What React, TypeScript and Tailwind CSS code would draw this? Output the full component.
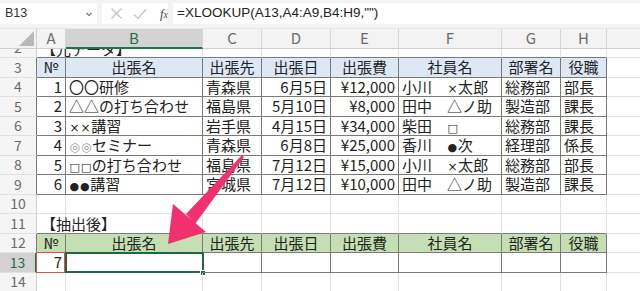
const cols = [
  { key: "A", w: "w-[29px]" },
  { key: "B", w: "w-[137px]" },
  { key: "C", w: "w-[59px]" },
  { key: "D", w: "w-[69px]" },
  { key: "E", w: "w-[68px]" },
  { key: "F", w: "w-[103px]" },
  { key: "G", w: "w-[59px]" },
  { key: "H", w: "w-[46px]" },
];

const header = ["№", "出張名", "出張先", "出張日", "出張費", "社員名", "部署名", "役職"];

const data = [
  ["1", "〇〇研修", "青森県", "6月5日", "¥12,000", "小川　×太郎", "総務部", "部長"],
  ["2", "△△の打ち合わせ", "福島県", "5月10日", "¥8,000", "田中　△ノ助", "製造部", "課長"],
  ["3", "××講習", "岩手県", "4月15日", "¥34,000", "柴田　□", "総務部", "課長"],
  ["4", "◎◎セミナー", "青森県", "6月8日", "¥25,000", "香川　●次", "経理部", "係長"],
  ["5", "□□の打ち合わせ", "福島県", "7月12日", "¥15,000", "小川　×太郎", "総務部", "部長"],
  ["6", "●●講習", "宮城県", "7月12日", "¥10,000", "田中　△ノ助", "製造部", "課長"],
];

// right aligned columns in data rows
const right = [true, false, false, true, true, false, false, false];

// symbols that Excel draws with a narrow latin font
function Txt({ s }: { s: string }) {
  return (
    <>
      {Array.from(s).map((ch, i) => {
        if (ch === "×")
          return (
            <span key={i} className="text-[12px] mx-[0.5px]" style={{ fontFamily: '"DejaVu Sans", sans-serif' }}>
              ×
            </span>
          );
        if (ch === "●" || ch === "□")
          return (
            <span key={i} className="text-[11px] mx-[0.5px]" style={{ fontFamily: '"DejaVu Sans", sans-serif' }}>
              {ch}
            </span>
          );
        if (ch === "◎")
          return (
            <span key={i} className="text-[12px] text-[#999] mx-[0.5px]" style={{ fontFamily: '"DejaVu Sans", sans-serif' }}>
              ◎
            </span>
          );
        return <span key={i}>{ch}</span>;
      })}
    </>
  );
}

function RowHead({ n, dark, selected }: { n: number; dark?: boolean; selected?: boolean }) {
  return (
    <div
      className={`w-[37px] shrink-0 h-full flex items-center justify-center text-[14px] border-b border-b-[#e1e1e1] ${
        selected
          ? "bg-[#d2d2d2] text-[#1e6e42] border-r-2 border-r-[#217346]"
          : `bg-[#f5f5f5] text-[#6a6a6a] border-r ${dark ? "border-r-[#7a7a7a]" : "border-r-[#d0d0d0]"}`
      }`}
    >
      {n}
    </div>
  );
}

function BlankRow({ n, label, darkBottom }: { n: number; label?: string; darkBottom?: boolean }) {
  return (
    <div className="flex h-[19.5px] relative">
      <RowHead n={n} />
      {cols.map((c) => (
        <div
          key={c.key}
          className={`${c.w} shrink-0 h-full border-r border-r-[#e1e1e1] border-b ${
            darkBottom ? "border-b-[#7a7a7a]" : "border-b-[#e1e1e1]"
          }`}
        />
      ))}
      <div className="flex-1 h-full border-b border-b-[#e1e1e1]" />
      {label && (
        <span className="absolute left-[41px] top-0 leading-[19.5px] text-[15px] text-[#222] whitespace-nowrap">
          {label}
        </span>
      )}
    </div>
  );
}

function TableRow({
  n,
  cells,
  bg,
  center,
}: {
  n: number;
  cells: string[];
  bg?: string;
  center?: boolean;
}) {
  return (
    <div className="flex h-[19.5px]">
      <RowHead n={n} dark />
      {cols.map((c, i) => (
        <div
          key={c.key}
          className={`${c.w} shrink-0 h-full border-r border-b border-[#7a7a7a] overflow-hidden whitespace-nowrap px-[3px] leading-[18.5px] text-[15px] text-[#222] ${
            bg ?? ""
          } ${center ? "text-center" : right[i] ? "text-right" : "text-left"}`}
        >
          <Txt s={cells[i]} />
        </div>
      ))}
      <div className="flex-1 h-full border-b border-b-[#e1e1e1]" />
    </div>
  );
}

export default function App() {
  return (
    <div
      className="w-[640px] h-[291px] overflow-hidden bg-white relative"
      style={{ fontFamily: '"Noto Sans CJK JP", "Noto Sans", sans-serif' }}
    >
      {/* formula bar */}
      <div className="h-[25px] bg-[#f3f3f3] flex items-center gap-[5px] pt-[2px]">
        <div className="w-[97px] h-[21px] bg-white flex items-center justify-between pl-[5px] pr-[4px] text-[12.5px] text-[#333]">
          <span style={{ fontFamily: '"Liberation Sans", sans-serif' }}>B13</span>
          <svg width="8" height="8" viewBox="0 0 8 8" fill="none" stroke="#777" strokeWidth="1.2">
            <path d="M1.5 3 L4 5.5 L6.5 3" />
          </svg>
        </div>
        <div className="w-[66px] h-[21px] bg-white flex items-center gap-[10px] pl-[8px]">
          <svg width="13" height="13" viewBox="0 0 13 13" stroke="#c2c2c2" strokeWidth="1.2">
            <path d="M1.5 1.5 L11.5 11.5 M11.5 1.5 L1.5 11.5" />
          </svg>
          <svg width="14" height="12" viewBox="0 0 14 12" fill="none" stroke="#c2c2c2" strokeWidth="1.2">
            <path d="M1 6.5 L5 10.5 L13 1.5" />
          </svg>
          <span
            className="text-[13px] italic text-[#444] ml-[3px]"
            style={{ fontFamily: '"Liberation Serif", serif' }}
          >
            f<span className="text-[10px]">x</span>
          </span>
        </div>
        <div
          className="flex-1 h-[21px] bg-white flex items-center pl-[4px] text-[13.5px] text-[#222] whitespace-nowrap"
          style={{ fontFamily: '"Liberation Sans", sans-serif' }}
        >
          =XLOOKUP(A13,A4:A9,B4:H9,"")
        </div>
      </div>
      <div className="h-[4px] bg-[#f3f3f3] border-b border-b-[#e6e6e6]" />

      {/* column headers */}
      <div className="flex h-[20px] bg-[#f3f3f3]">
        <div className="w-[37px] shrink-0 h-full flex items-end justify-end pr-[2px] pb-[2px] border-r border-r-[#d0d0d0] border-b border-b-[#d0d0d0]">
          <svg width="15" height="15" viewBox="0 0 15 15">
            <polygon points="15,0 15,15 0,15" fill="#b8b8b8" />
          </svg>
        </div>
        {cols.map((c) => (
          <div
            key={c.key}
            className={`${c.w} shrink-0 h-full flex items-center justify-center text-[15px] border-r border-r-[#d5d5d5] ${
              c.key === "B"
                ? "bg-[#d3d3d3] text-[#1e6e42] border-b-2 border-b-[#217346]"
                : "text-[#6a6a6a] border-b border-b-[#d0d0d0]"
            }`}
          >
            {c.key}
          </div>
        ))}
        <div className="flex-1 h-full border-b border-b-[#d0d0d0]" />
      </div>

      {/* row 2, partly hidden behind the frozen header */}
      <div className="h-[9px] overflow-hidden">
        <div className="-mt-[10.5px]">
          <BlankRow n={2} label="【元データ】" darkBottom />
        </div>
      </div>

      <TableRow n={3} cells={header} bg="bg-[#dde8f4]" center />
      {data.map((r, i) => (
        <TableRow key={i} n={4 + i} cells={r} />
      ))}
      <BlankRow n={10} />
      <BlankRow n={11} label="【抽出後】" darkBottom />
      <TableRow n={12} cells={header} bg="bg-[#c6deb3]" center />

      {/* row 13 */}
      <div className="flex h-[19.5px]">
        <RowHead n={13} selected />
        {cols.map((c, i) => (
          <div
            key={c.key}
            className={`${c.w} shrink-0 h-full border-r border-b border-[#7a7a7a] relative text-[15px] text-[#222] leading-[18.5px] px-[3px] ${
              i === 0 ? "text-right" : ""
            }`}
          >
            {i === 0 && (
              <>
                <span className="absolute inset-[-1px_0_-1px_-1px] border border-[#d9534f]" />
                7
              </>
            )}
            {i === 1 && (
              <>
                <span className="absolute inset-[-1px_-2px_-1px_-1px] border-2 border-[#1f6b40]" />
                <span className="absolute right-[-4px] bottom-[-4px] w-[6px] h-[6px] bg-[#1f6b40] border border-white" />
              </>
            )}
          </div>
        ))}
        <div className="flex-1 h-full border-b border-b-[#e1e1e1]" />
      </div>
      <BlankRow n={14} />

      {/* pink arrow annotation */}
      <svg className="absolute left-0 top-0 pointer-events-none" width="640" height="291">
        <polygon points="244,157 242,155 186,214 195,224" fill="#f0316e" />
        <polygon points="168,244 173,204 206,232" fill="#f0316e" />
      </svg>
    </div>
  );
}
